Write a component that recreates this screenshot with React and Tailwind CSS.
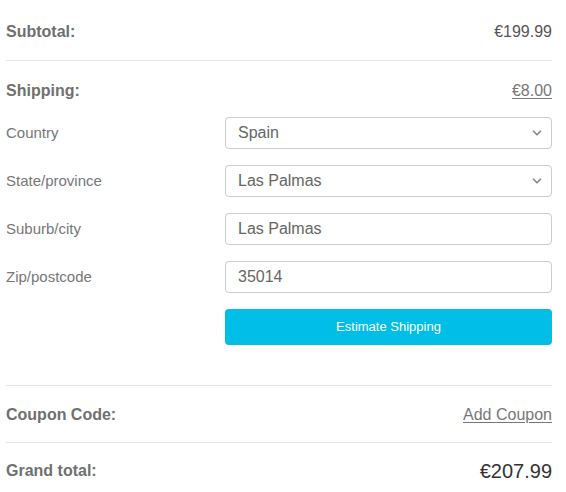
import { ChevronDown } from "lucide-react";

const font = { fontFamily: "'Liberation Sans', Arial, sans-serif" };

function Field({ label, value, select }) {
  return (
    <div className="flex items-center">
      <label className="w-[219px] shrink-0 text-[15px] text-[#777]">{label}</label>
      <div className="relative flex-1">
        <div className="flex h-[32px] items-center rounded-[4px] border border-[#ccc] bg-white pl-3 pr-3 text-[16px] text-[#666]">
          {value}
        </div>
        {select && (
          <ChevronDown
            className="absolute right-[8px] top-1/2 h-[14px] w-[14px] -translate-y-1/2 text-[#888]"
            strokeWidth={3}
          />
        )}
      </div>
    </div>
  );
}

export default function App() {
  return (
    <div className="w-[546px] ml-[6px] bg-white" style={font}>
      {/* subtotal */}
      <div className="flex h-[61px] items-center justify-between border-b border-[#e5e5e5] pt-1">
        <span className="text-[16px] font-bold text-[#707070]">Subtotal:</span>
        <span className="text-[16px] text-[#555]">€199.99</span>
      </div>

      {/* shipping */}
      <div className="border-b border-[#e5e5e5] pb-[40px]">
        <div className="flex h-[56px] items-center justify-between pt-1">
          <span className="text-[16px] font-bold text-[#707070]">Shipping:</span>
          <a href="#" className="text-[16px] text-[#777] underline underline-offset-2">€8.00</a>
        </div>
        <div className="flex flex-col gap-4">
          <Field label="Country" value="Spain" select />
          <Field label="State/province" value="Las Palmas" select />
          <Field label="Suburb/city" value="Las Palmas" />
          <Field label="Zip/postcode" value="35014" />
          <div className="flex">
            <div className="w-[219px] shrink-0" />
            <button className="h-[36px] flex-1 rounded-[4px] bg-[#00bee6] text-[13px] text-white">
              Estimate Shipping
            </button>
          </div>
        </div>
      </div>

      {/* coupon */}
      <div className="flex h-[57px] items-center justify-between border-b border-[#e5e5e5] pt-[2px]">
        <span className="text-[16px] font-bold text-[#707070]">Coupon Code:</span>
        <a href="#" className="text-[16px] text-[#777] underline underline-offset-2">Add Coupon</a>
      </div>

      {/* grand total */}
      <div className="flex h-[56px] items-center justify-between">
        <span className="text-[16px] font-bold text-[#707070]">Grand total:</span>
        <span className="text-[20px] text-[#333]">€207.99</span>
      </div>
    </div>
  );
}
